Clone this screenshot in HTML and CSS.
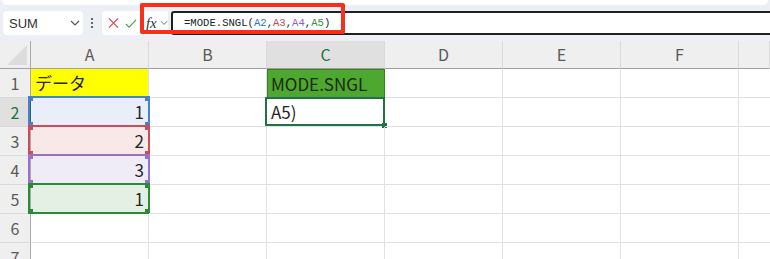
FILE: index.html
```html
<!DOCTYPE html>
<html lang="ja">
<head>
<meta charset="UTF-8">
<title>MODE.SNGL</title>
<link rel="stylesheet" href="styles.css">
</head>
<body>
<div class="ribbon-edge"></div>

<div class="toolbar">
  <div class="name-box">
    <span>SUM</span>
    <svg width="10" height="6" viewBox="0 0 10 6"><path d="M1 1 L5 5 L9 1" fill="none" stroke="#555" stroke-width="1.2"/></svg>
  </div>
  <svg class="dots" width="4" height="12" viewBox="0 0 4 12"><circle cx="2" cy="2" r="1.1" fill="#444"/><circle cx="2" cy="6" r="1.1" fill="#444"/><circle cx="2" cy="10" r="1.1" fill="#444"/></svg>
  <div class="edit-box">
    <svg class="cancel" width="12" height="12" viewBox="0 0 12 12"><path d="M1 1 L11 11 M11 1 L1 11" stroke="#e0474c" stroke-width="1.3"/></svg>
    <svg class="enter" width="13" height="11" viewBox="0 0 13 11"><path d="M1 6 L4.5 9.5 L12 1.5" fill="none" stroke="#4aa55a" stroke-width="1.3"/></svg>
    <span class="fx">fx</span>
    <svg width="9" height="6" viewBox="0 0 9 6"><path d="M1 1 L4.5 4.5 L8 1" fill="none" stroke="#999" stroke-width="1.1"/></svg>
  </div>
  <div class="formula">
    <span>=MODE.SNGL(</span><span class="r-blue">A2</span>,<span class="r-red">A3</span>,<span class="r-purple">A4</span>,<span class="r-green">A5</span>)
  </div>
  <div class="callout"></div>
</div>

<div class="sheet">
  <div class="corner"></div>
  <div class="col-head">A</div>
  <div class="col-head">B</div>
  <div class="col-head active">C</div>
  <div class="col-head">D</div>
  <div class="col-head">E</div>
  <div class="col-head">F</div>
  <div class="col-head last"></div>

  <div class="row-head">1</div>
  <div class="cell yellow">データ</div>
  <div class="cell"></div>
  <div class="cell head-green">MODE.SNGL</div>
  <div class="cell"></div><div class="cell"></div><div class="cell"></div><div class="cell last"></div>

  <div class="row-head active">2</div>
  <div class="cell num ref blue">1</div>
  <div class="cell"></div>
  <div class="cell editing">A5)</div>
  <div class="cell"></div><div class="cell"></div><div class="cell"></div><div class="cell last"></div>

  <div class="row-head">3</div>
  <div class="cell num ref red">2</div>
  <div class="cell"></div><div class="cell"></div><div class="cell"></div><div class="cell"></div><div class="cell"></div><div class="cell last"></div>

  <div class="row-head">4</div>
  <div class="cell num ref purple">3</div>
  <div class="cell"></div><div class="cell"></div><div class="cell"></div><div class="cell"></div><div class="cell"></div><div class="cell last"></div>

  <div class="row-head">5</div>
  <div class="cell num ref green">1</div>
  <div class="cell"></div><div class="cell"></div><div class="cell"></div><div class="cell"></div><div class="cell"></div><div class="cell last"></div>

  <div class="row-head">6</div>
  <div class="cell"></div><div class="cell"></div><div class="cell"></div><div class="cell"></div><div class="cell"></div><div class="cell"></div><div class="cell last"></div>

  <div class="row-head">7</div>
  <div class="cell"></div><div class="cell"></div><div class="cell"></div><div class="cell"></div><div class="cell"></div><div class="cell"></div><div class="cell last"></div>
</div>
</body>
</html>
```

FILE: styles.css
```css
* {
  margin: 0;
  padding: 0;
  box-sizing: border-box;
}

body {
  width: 770px;
  height: 259px;
  overflow: hidden;
  background: #eceff3;
  font-family: "Noto Sans CJK JP", sans-serif;
}

.ribbon-edge {
  height: 5px;
  margin: 0 2px;
  background: #fff;
  border-radius: 0 0 8px 8px;
}

/* formula bar */
.toolbar {
  position: relative;
  display: flex;
  align-items: center;
  height: 24px;
  margin: 6px 0 6px 3px;
}

.name-box {
  width: 80px;
  height: 24px;
  background: #fff;
  border-radius: 4px;
  display: flex;
  align-items: center;
  justify-content: space-between;
  padding: 0 3px 0 6px;
  font-family: "Liberation Sans", sans-serif;
  font-size: 13px;
  color: #333;
}

.dots {
  margin: 0 8px 0 7px;
}

.edit-box {
  width: 66px;
  height: 24px;
  background: #fff;
  border-radius: 4px 0 0 4px;
  display: flex;
  align-items: center;
  padding-left: 6px;
}

.cancel { margin-right: 6px; }
.enter { margin-right: 9px; }

.fx {
  font-family: "Liberation Serif", serif;
  font-style: italic;
  font-size: 15px;
  color: #333;
  margin-right: 3px;
}

.formula {
  flex: 1;
  height: 24px;
  margin-left: 3px;
  background: #fff;
  border: 2px solid #1f1f1f;
  border-right: none;
  border-radius: 3px 0 0 3px;
  padding-left: 11px;
  font-family: "Liberation Mono", monospace;
  font-size: 10.6px;
  line-height: 20px;
  color: #222;
}

.r-blue { color: #2f74c0; }
.r-red { color: #c8454f; }
.r-purple { color: #8a63c4; }
.r-green { color: #3d8a3d; }

.callout {
  position: absolute;
  left: 137px;
  top: -8px;
  width: 205px;
  height: 31px;
  border: 4px solid #f7301b;
  border-radius: 2px;
}

/* sheet */
.sheet {
  display: grid;
  grid-template-columns: 31px repeat(6, 118px) 1fr;
  grid-template-rows: 28px;
  grid-auto-rows: 29px;
  background: #fff;
}

.corner {
  background: #efefef;
  border-right: 1px solid #a9a9a9;
  border-bottom: 1px solid #a0a0a0;
  position: relative;
}

.corner::after {
  content: "";
  position: absolute;
  right: 3px;
  bottom: 3px;
  border-left: 20px solid transparent;
  border-bottom: 20px solid #dcdcdc;
}

.col-head {
  background: #efefef;
  border-right: 1px solid #dadada;
  border-bottom: 1px solid #a0a0a0;
  text-align: center;
  font-size: 16px;
  line-height: 27px;
  color: #5a5a5a;
}

.col-head.active {
  background: #e0e0e0;
  color: #217346;
}

.row-head {
  background: #efefef;
  border-right: 1px solid #a9a9a9;
  border-bottom: 1px solid #dadada;
  text-align: center;
  font-size: 16px;
  line-height: 28px;
  color: #5a5a5a;
}

.row-head.active {
  background: #e0e0e0;
  color: #217346;
  border-right-color: #217346;
}

.cell {
  position: relative;
  border-right: 1px solid #e1e1e1;
  border-bottom: 1px solid #e1e1e1;
  font-size: 17px;
  line-height: 28px;
  padding: 0 4px;
  color: #262626;
  white-space: nowrap;
}

.cell.last { border-right: none; }

.cell.num { text-align: right; }

.yellow { background: #ffff00; }

.head-green {
  background: #4ea72e;
  color: #1b2b12;
  border: 1px solid #3b7f22;
  padding-left: 3px;
}

.editing::before {
  content: "";
  position: absolute;
  inset: -1px -1px 0 -2px;
  border: 2px solid #217346;
}

.editing::after {
  content: "";
  position: absolute;
  right: -3px;
  bottom: -2px;
  width: 5px;
  height: 5px;
  background: #217346;
}

.ref::before {
  content: "";
  position: absolute;
  inset: -1px -1px 0 -2px;
  border: 2px solid var(--ref);
  background:
    linear-gradient(var(--ref), var(--ref)) left top / 5px 5px no-repeat,
    linear-gradient(var(--ref), var(--ref)) right top / 5px 5px no-repeat,
    linear-gradient(var(--ref), var(--ref)) left bottom / 5px 5px no-repeat,
    linear-gradient(var(--ref), var(--ref)) right bottom / 5px 5px no-repeat;
  background-origin: border-box;
  margin: -1px;
}

.blue { --ref: #4a7fd0; background: #e9eef8; }
.red { --ref: #cc4d58; background: #f9e8e8; }
.purple { --ref: #9673c8; background: #efebf7; }
.green { --ref: #2b8a37; background: #e5f0e4; }
```
